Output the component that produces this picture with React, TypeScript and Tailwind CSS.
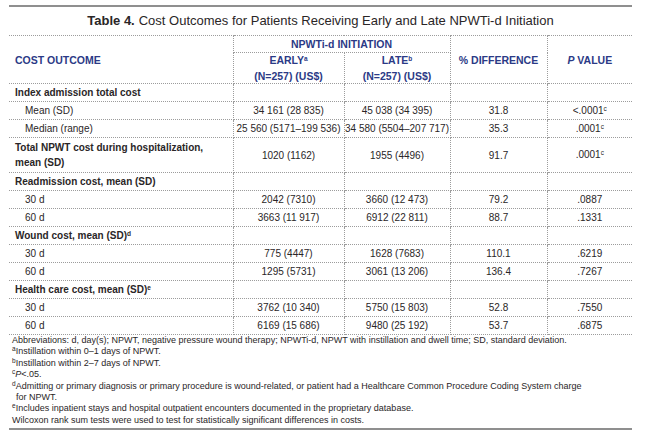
import React from 'react';

type Row = {
  label: string;
  head?: boolean;
  sub?: boolean;
  labelSup?: string;
  early?: string;
  late?: string;
  diff?: string;
  p?: string;
  pSup?: string;
  tall?: boolean;
};

const ROWS: Row[] = [
  { label: 'Index admission total cost', head: true },
  { label: 'Mean (SD)', sub: true, early: '34 161 (28 835)', late: '45 038 (34 395)', diff: '31.8', p: '<.0001', pSup: 'c' },
  { label: 'Median (range)', sub: true, early: '25 560 (5171–199 536)', late: '34 580 (5504–207 717)', diff: '35.3', p: '.0001', pSup: 'c' },
  { label: 'Total NPWT cost during hospitalization,', head: true, tall: true, early: '1020 (1162)', late: '1955 (4496)', diff: '91.7', p: '.0001', pSup: 'c' },
  { label: 'Readmission cost, mean (SD)', head: true },
  { label: '30 d', sub: true, early: '2042 (7310)', late: '3660 (12 473)', diff: '79.2', p: '.0887' },
  { label: '60 d', sub: true, early: '3663 (11 917)', late: '6912 (22 811)', diff: '88.7', p: '.1331' },
  { label: 'Wound cost, mean (SD)', head: true, labelSup: 'd' },
  { label: '30 d', sub: true, early: '775 (4447)', late: '1628 (7683)', diff: '110.1', p: '.6219' },
  { label: '60 d', sub: true, early: '1295 (5731)', late: '3061 (13 206)', diff: '136.4', p: '.7267' },
  { label: 'Health care cost, mean (SD)', head: true, labelSup: 'e' },
  { label: '30 d', sub: true, early: '3762 (10 340)', late: '5750 (15 803)', diff: '52.8', p: '.7550' },
  { label: '60 d', sub: true, early: '6169 (15 686)', late: '9480 (25 192)', diff: '53.7', p: '.6875' },
];

const cell = 'border border-dotted border-[#9c9c9c] p-0 align-middle';
const sup = 'text-[6.5px] relative top-[-3px] align-baseline';

export default function App() {
  return (
    <div className="w-[650px] h-[436px] bg-white font-['Liberation_Sans_Narrow','Liberation_Sans',Arial,sans-serif] text-[#2a2627] overflow-hidden">
      <div className="ml-[9px] w-[623px] pt-[5px]">
        <div className="h-[2px] bg-[#8f8f8f]" />
        <div className="h-[28px] flex items-center justify-center text-[13px]">
          <span className="font-bold mr-[4px]">Table 4.</span>
          <span>Cost Outcomes for Patients Receiving Early and Late NPWTi-d Initiation</span>
        </div>
        <table className="w-[623px] border-collapse table-fixed [&_tr>*:first-child]:border-l-0 [&_tr>*:last-child]:border-r-0">
          <colgroup>
            <col className="w-[224px]" />
            <col className="w-[111px]" />
            <col className="w-[106px]" />
            <col className="w-[97px]" />
            <col className="w-[85px]" />
          </colgroup>
          <thead className="text-[#2b3a86] font-bold text-[10.5px] leading-[14px]">
            <tr className="h-[17px]">
              <th rowSpan={2} className={`${cell} text-left pl-[6px] border-l-0`}>COST OUTCOME</th>
              <th colSpan={2} className={`${cell} text-center`}>NPWTi-d INITIATION</th>
              <th rowSpan={2} className={`${cell} text-center`}>% DIFFERENCE</th>
              <th rowSpan={2} className={`${cell} text-center border-r-0`}>
                <i>P</i> VALUE
              </th>
            </tr>
            <tr className="h-[31px]">
              <th className={`${cell} text-center !border-l`}>
                EARLY<span className={sup}>a</span>
                <br />
                (N=257) (US$)
              </th>
              <th className={`${cell} text-center !border-r`}>
                LATE<span className={sup}>b</span>
                <br />
                (N=257) (US$)
              </th>
            </tr>
          </thead>
          <tbody className="text-[10px] leading-[15px]">
            {ROWS.map((r, i) => (
              <tr key={i} className={r.tall ? 'h-[35px]' : 'h-[18px]'}>
                <td className={`${cell} ${r.sub ? 'pl-[16px]' : 'pl-[6px] font-bold'}`}>
                  {r.label}
                  {r.labelSup && <span className={sup}>{r.labelSup}</span>}
                  {r.tall && (
                    <>
                      <br />
                      mean (SD)
                    </>
                  )}
                </td>
                <td className={`${cell} text-center`}>{r.early}</td>
                <td className={`${cell} text-center`}>{r.late}</td>
                <td className={`${cell} text-center`}>{r.diff}</td>
                <td className={`${cell} text-center`}>
                  {r.p}
                  {r.pSup && <span className={sup}>{r.pSup}</span>}
                </td>
              </tr>
            ))}
          </tbody>
        </table>
        <div className="pl-[3px] text-[9px] leading-[11.4px]">
          <p>
            Abbreviations: d, day(s); NPWT, negative pressure wound therapy; NPWTi-d, NPWT with instillation and dwell time; SD,
            standard deviation.
          </p>
          <p>
            <span className={sup}>a</span>Instillation within 0–1 days of NPWT.
          </p>
          <p>
            <span className={sup}>b</span>Instillation within 2–7 days of NPWT.
          </p>
          <p>
            <span className={sup}>c</span>
            <i>P</i>&lt;.05.
          </p>
          <p>
            <span className={sup}>d</span>Admitting or primary diagnosis or primary procedure is wound-related, or patient had a
            Healthcare Common Procedure Coding System charge
          </p>
          <p className="pl-[4px]">for NPWT.</p>
          <p>
            <span className={sup}>e</span>Includes inpatient stays and hospital outpatient encounters documented in the
            proprietary database.
          </p>
          <p>Wilcoxon rank sum tests were used to test for statistically significant differences in costs.</p>
        </div>
        <div className="mt-[2px] h-[2px] bg-[#8f8f8f]" />
      </div>
    </div>
  );
}
